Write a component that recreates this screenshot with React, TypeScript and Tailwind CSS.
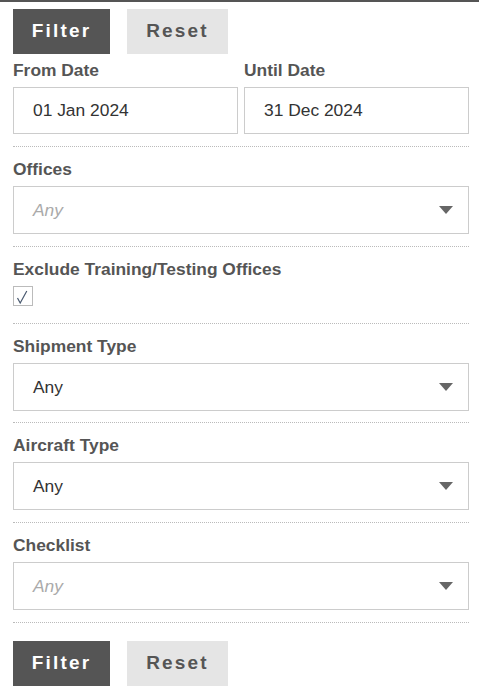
import React from 'react';

const font = { fontFamily: '"Liberation Sans", Arial, sans-serif' };

function Caret() {
  return (
    <svg width="14" height="8" viewBox="0 0 14 8" className="shrink-0">
      <path d="M0 0 L14 0 L7 8 Z" fill="#666" />
    </svg>
  );
}

function Label({ children }: { children: React.ReactNode }) {
  return <div className="text-[17.4px] font-bold leading-[22px] text-[#555] mb-[6px]">{children}</div>;
}

function SelectBox({ value, placeholder }: { value?: string; placeholder?: boolean }) {
  return (
    <div className="h-[48px] border border-[#ccc] bg-white flex items-center justify-between pl-[19px] pr-[15px]">
      <span className={placeholder ? 'text-[17.4px] italic text-[#aaa]' : 'text-[17.4px] text-[#333]'}>{value}</span>
      <Caret />
    </div>
  );
}

function Group({ children, tight }: { children: React.ReactNode; tight?: boolean }) {
  return (
    <div className={tight ? 'pt-[11px] pb-[11px] border-b border-dotted border-[#bbb]' : 'pt-[11px] pb-[12px] border-b border-dotted border-[#bbb]'}>
      {children}
    </div>
  );
}

function Buttons() {
  return (
    <div className="flex gap-[17px]">
      <button className="h-[45px] w-[97px] bg-[#555] text-white text-[19px] font-bold tracking-[2.2px]">Filter</button>
      <button className="h-[45px] w-[101px] bg-[#e5e5e5] text-[#555] text-[19px] font-bold tracking-[2.2px]">Reset</button>
    </div>
  );
}

export default function App() {
  return (
    <div style={font} className="min-h-[697px] bg-white border-t-2 border-[#555]">
      <div className="pl-[13px] pr-[10px] pt-[7px]">
        <Buttons />
        <div className="pt-[5px] pb-[12px] border-b border-dotted border-[#bbb]">
          <div className="grid grid-cols-2 gap-[6px]">
            <div>
              <Label>From Date</Label>
              <div className="h-[47px] border border-[#ccc] flex items-center pl-[19px] text-[17.4px] text-[#333]">01 Jan 2024</div>
            </div>
            <div>
              <Label>Until Date</Label>
              <div className="h-[47px] border border-[#ccc] flex items-center pl-[19px] text-[17.4px] text-[#333]">31 Dec 2024</div>
            </div>
          </div>
        </div>
        <Group>
          <Label>Offices</Label>
          <SelectBox value="Any" placeholder />
        </Group>
        <div className="pt-[11px] pb-[17px] border-b border-dotted border-[#bbb]">
          <Label>Exclude Training/Testing Offices</Label>
          <div className="w-[20px] h-[20px] border border-[#bbb]">
            <svg width="18" height="18" viewBox="0 0 18 18">
              <path d="M3.5 11 L6.2 16 L12.8 4" fill="none" stroke="#4a5a70" strokeWidth="1.2" />
            </svg>
          </div>
        </div>
        <Group tight>
          <Label>Shipment Type</Label>
          <SelectBox value="Any" />
        </Group>
        <Group>
          <Label>Aircraft Type</Label>
          <SelectBox value="Any" />
        </Group>
        <Group>
          <Label>Checklist</Label>
          <SelectBox value="Any" placeholder />
        </Group>
        <div className="pt-[18px]">
          <Buttons />
        </div>
      </div>
    </div>
  );
}
